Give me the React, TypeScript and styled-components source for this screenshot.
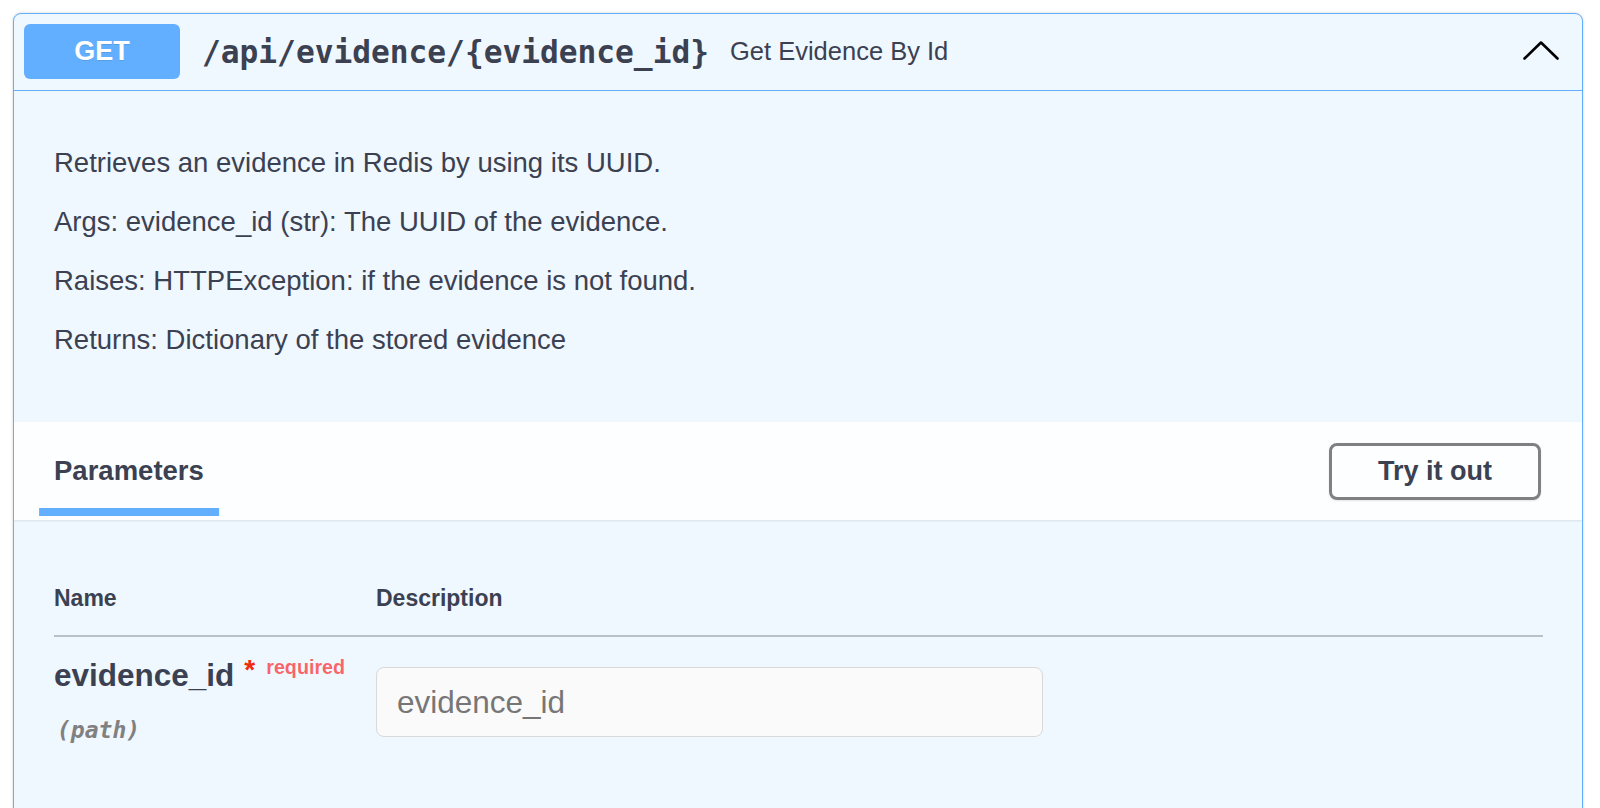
import React from "react";
import styled, { createGlobalStyle } from "styled-components";

const GlobalStyle = createGlobalStyle`
  html, body {
    margin: 0;
    padding: 0;
    background: #ffffff;
  }
  body {
    font-family: "Liberation Sans", Arial, Helvetica, sans-serif;
    color: #3b4151;
  }
  * { box-sizing: border-box; }
`;

const Page = styled.div`
  padding: 13px 17px 0 13px;
`;

const Opblock = styled.section`
  border: 1px solid #61affe;
  border-radius: 8px;
  background: #eff7ff;
  box-shadow: 0 0 3px rgba(0, 0, 0, 0.19);
  overflow: hidden;
`;

const Summary = styled.div`
  display: flex;
  align-items: center;
  padding: 10px 10px 11px 10px;
  border-bottom: 1px solid #61affe;
`;

const Method = styled.span`
  display: flex;
  align-items: center;
  justify-content: center;
  width: 156px;
  height: 55px;
  border-radius: 6px;
  background: #61affe;
  color: #ffffff;
  font-family: "Liberation Sans", Arial, sans-serif;
  font-weight: 700;
  font-size: 27px;
  text-shadow: 0 1px 0 rgba(0, 0, 0, 0.1);
`;

const Path = styled.span`
  margin-left: 22px;
  font-family: "DejaVu Sans Mono", "Liberation Mono", monospace;
  font-weight: 700;
  font-size: 31.2px;
  color: #3b4151;
`;

const SummaryDesc = styled.span`
  flex: 1;
  margin-left: 21px;
  font-size: 25.5px;
  color: #3b4151;
`;

const ArrowIcon = styled.svg`
  flex: none;
  margin-right: 13px;
  margin-bottom: 3px;
`;

const Description = styled.div`
  display: flex;
  flex-direction: column;
  gap: 28px;
  padding: 56px 39px 67px 40px;
`;

const Para = styled.p`
  margin: 0;
  font-size: 27.5px;
  line-height: 31px;
  color: #3b4151;
`;

const SectionHeader = styled.div`
  display: flex;
  align-items: center;
  justify-content: space-between;
  min-height: 98px;
  padding: 0 41px 0 40px;
  background: rgba(255, 255, 255, 0.8);
  box-shadow: 0 1px 2px rgba(0, 0, 0, 0.1);
`;

const TabTitle = styled.h4`
  position: relative;
  margin: 0;
  font-size: 27.5px;
  font-weight: 700;
  color: #3b4151;

  &::after {
    content: "";
    position: absolute;
    left: 50%;
    bottom: -29px;
    width: 120%;
    height: 8px;
    transform: translateX(-50%);
    background: #61affe;
  }
`;

const TryButton = styled.button`
  width: 212px;
  height: 57px;
  border: 3px solid #808080;
  border-radius: 8px;
  background: transparent;
  box-shadow: 0 1px 2px rgba(0, 0, 0, 0.1);
  font-family: "Liberation Sans", Arial, sans-serif;
  font-weight: 700;
  font-size: 27px;
  color: #3b4151;
  cursor: pointer;
`;

const TableContainer = styled.div`
  padding: 42px 39px 60px 40px;
`;

const GridRow = styled.div<{ $head?: boolean }>`
  display: grid;
  grid-template-columns: 322px 1fr;
  padding: ${(p) => (p.$head ? "23px 0" : "20px 0")};
  border-bottom: ${(p) => (p.$head ? "2px solid rgba(59, 65, 81, 0.3)" : "none")};
`;

const Th = styled.div`
  font-size: 23px;
  font-weight: 700;
  color: #3b4151;
`;

const NameCell = styled.div`
  display: flex;
  flex-direction: column;
`;

const ParamName = styled.div`
  font-size: 31.5px;
  font-weight: 700;
  color: #3b4151;
  white-space: nowrap;
`;

const Star = styled.span`
  position: relative;
  top: -7px;
  padding: 0 11px 0 10px;
  font-size: 28px;
  font-weight: 700;
  color: #f02a0c;
`;

const RequiredTag = styled.span`
  position: relative;
  top: -12px;
  font-size: 19.7px;
  font-weight: 700;
  color: rgba(255, 0, 0, 0.6);
`;

const ParamIn = styled.div`
  margin-top: 23px;
  margin-left: 3px;
  font-family: "DejaVu Sans Mono", "Liberation Mono", monospace;
  font-style: italic;
  font-weight: 700;
  font-size: 23px;
  color: #808080;
`;

const TextInput = styled.input`
  margin-top: 10px;
  width: 667px;
  height: 70px;
  padding: 0 20px;
  border: 1px solid #d9d9d9;
  border-radius: 8px;
  background: #fafafa;
  font-family: "Liberation Sans", Arial, sans-serif;
  font-size: 31.5px;
  color: #3b4151;
  outline: none;

  &::placeholder {
    color: #767676;
  }
`;

export default function App() {
  return (
    <>
      <GlobalStyle />
      <Page>
        <Opblock>
          <Summary>
            <Method>GET</Method>
            <Path>/api/evidence/{"{evidence_id}"}</Path>
            <SummaryDesc>Get Evidence By Id</SummaryDesc>
            <ArrowIcon width="36" height="19" viewBox="0 0 36 19" aria-hidden="true">
              <polyline
                points="1.5,17.5 18,1.5 34.5,17.5"
                fill="none"
                stroke="#000000"
                strokeWidth="2.6"
                strokeLinecap="round"
                strokeLinejoin="round"
              />
            </ArrowIcon>
          </Summary>
          <Description>
            <Para>Retrieves an evidence in Redis by using its UUID.</Para>
            <Para>Args: evidence_id (str): The UUID of the evidence.</Para>
            <Para>Raises: HTTPException: if the evidence is not found.</Para>
            <Para>Returns: Dictionary of the stored evidence</Para>
          </Description>
          <SectionHeader>
            <TabTitle>Parameters</TabTitle>
            <TryButton type="button">Try it out</TryButton>
          </SectionHeader>
          <TableContainer>
            <GridRow $head>
              <Th>Name</Th>
              <Th>Description</Th>
            </GridRow>
            <GridRow>
              <NameCell>
                <ParamName>
                  evidence_id
                  <Star>*</Star>
                  <RequiredTag>required</RequiredTag>
                </ParamName>
                <ParamIn>(path)</ParamIn>
              </NameCell>
              <div>
                <TextInput type="text" placeholder="evidence_id" />
              </div>
            </GridRow>
          </TableContainer>
        </Opblock>
      </Page>
    </>
  );
}
